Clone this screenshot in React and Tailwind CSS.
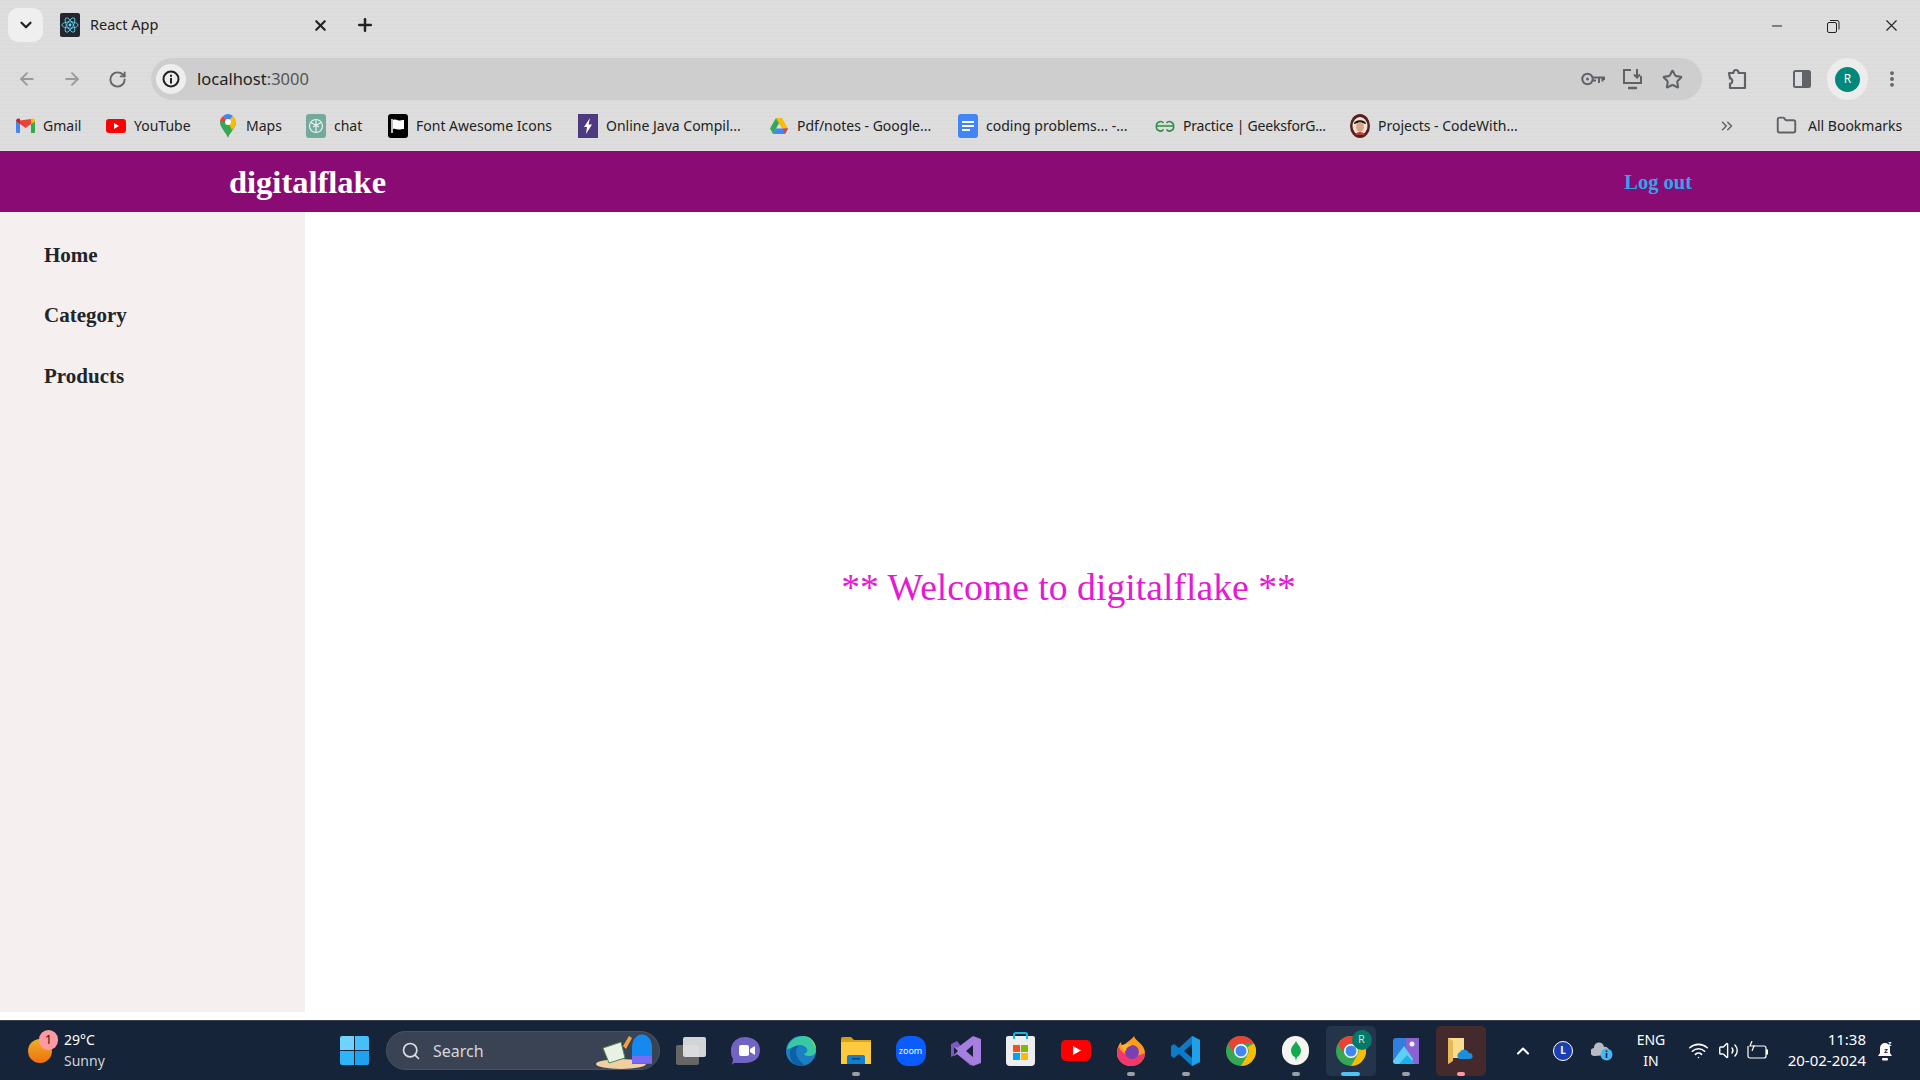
import { ArrowLeft, ArrowRight, RotateCw, X, Plus, ChevronDown, ChevronUp, ChevronsRight, Star, EllipsisVertical, Minus, Folder, Search, Wifi, Volume2 } from 'lucide-react'

const BOOKMARKS = [
  { label: 'Gmail', w: 'w-[91px]', icon: <GmailIcon /> },
  { label: 'YouTube', w: 'w-[112px]', icon: <YoutubeIcon /> },
  { label: 'Maps', w: 'w-[88px]', icon: <MapsIcon /> },
  { label: 'chat', w: 'w-[82px]', icon: <ChatIcon /> },
  { label: 'Font Awesome Icons', w: 'w-[190px]', icon: <FlagIcon /> },
  { label: 'Online Java Compil...', w: 'w-[191px]', icon: <BoltIcon /> },
  { label: 'Pdf/notes - Google...', w: 'w-[189px]', icon: <DriveIcon /> },
  { label: 'coding problems... -...', w: 'w-[197px]', icon: <DocsIcon /> },
  { label: 'Practice | GeeksforG...', w: 'w-[195px] tracking-[-0.2px]', icon: <GfgIcon /> },
  { label: 'Projects - CodeWith...', w: 'w-[368px]', icon: <AvatarIcon /> },
]

function GmailIcon() {
  return (
    <svg width="19" height="16" viewBox="0 0 19 16">
      <path d="M0 3v11a1 1 0 0 0 1 1h3V6z" fill="#4285f4" />
      <path d="M19 3v11a1 1 0 0 1-1 1h-3V6z" fill="#34a853" />
      <path d="M0 3l4 3 5.500 4 5.500-4V1z" fill="#ea4335" />
      <path d="M15 1v5l4-3c0-2-2-3-4-2z" fill="#fbbc04" />
      <path d="M0 3c0-2 2-3 4-2v5z" fill="#c5221f" />
    </svg>
  )
}

function YoutubeIcon() {
  return (
    <svg width="20" height="14" viewBox="0 0 20 14">
      <rect width="20" height="14" rx="3" fill="#f00" />
      <path d="M8 4l5 3-5 3z" fill="#fff" />
    </svg>
  )
}

function MapsIcon() {
  return (
    <svg width="16" height="24" viewBox="0 0 16 24">
      <path d="M8 24C6 18 0 14 0 8h16c0 6-6 10-8 16z" fill="#34a853" />
      <path d="M0 8a8 8 0 0 1 3-6l5 6z" fill="#ea4335" />
      <path d="M3 2a8 8 0 0 1 10 0L8 8z" fill="#4285f4" />
      <path d="M13 2a8 8 0 0 1 3 6c0 3-2 6-4 8L8 8z" fill="#fbbc04" />
      <circle cx="8" cy="8" r="3" fill="#fff" />
    </svg>
  )
}

function ChatIcon() {
  return (
    <span className="flex h-[24px] w-[20px] items-center justify-center rounded-[3px] bg-[#74aa9c]">
      <svg width="16" height="16" viewBox="0 0 16 16" fill="none" stroke="#e8f3f0" strokeWidth="1.200">
        <circle cx="8" cy="8" r="6.500" />
        <path d="M8 1.500v9M3 4.500l8 4.500M13 4.500l-8 4.500M8 14.500v-5" />
      </svg>
    </span>
  )
}

function FlagIcon() {
  return (
    <span className="flex h-[24px] w-[20px] items-center justify-center rounded-[3px] bg-black">
      <svg width="16" height="16" viewBox="0 0 16 16">
        <path d="M2 1v14" stroke="#fff" strokeWidth="1.500" />
        <path d="M3 2c3-1.500 5 1 7 .5s3-.5 4-.5v9c-2 0-3 .5-5 .5S5 10 3 11z" fill="#fff" />
      </svg>
    </span>
  )
}

function BoltIcon() {
  return (
    <span className="flex h-[24px] w-[20px] items-center justify-center bg-[#4e3a80]">
      <svg width="10" height="16" viewBox="0 0 10 16">
        <path d="M7 0L1 9h3l-1 7 6-9.500H5.500z" fill="#fff" />
      </svg>
    </span>
  )
}

function DriveIcon() {
  return (
    <svg width="18" height="16" viewBox="0 0 18 16">
      <path d="M6 0h6l6 10.500h-6z" fill="#fbbc04" />
      <path d="M6 0l3 5.200-6 10.800-3-5.500z" fill="#34a853" />
      <path d="M3 16l3-5.500h12L15 16z" fill="#4285f4" />
      <path d="M15 16l3-5.500h-5z" fill="#ea4335" />
    </svg>
  )
}

function DocsIcon() {
  return (
    <span className="flex h-[24px] w-[20px] flex-col justify-center gap-[2px] rounded-[3px] bg-[#4285f4] px-[4px]">
      <span className="h-[2px] w-full bg-white" />
      <span className="h-[2px] w-full bg-white" />
      <span className="h-[2px] w-[8px] bg-white" />
    </span>
  )
}

function GfgIcon() {
  return (
    <svg width="20" height="12" viewBox="0 0 20 12" fill="none" stroke="#2f8d46" strokeWidth="1.600">
      <path d="M10 6H1.500a4 4 0 0 1 7-3M1.500 6a4 4 0 0 0 7 3.500" />
      <path d="M10 6h8.500a4 4 0 0 0-7-3M18.500 6a4 4 0 0 1-7 3.500" />
    </svg>
  )
}

function AvatarIcon() {
  return (
    <svg width="20" height="24" viewBox="0 0 20 24">
      <ellipse cx="10" cy="12" rx="10" ry="12" fill="#5a1f1a" />
      <ellipse cx="10" cy="12" rx="7.500" ry="9" fill="#f0e6e0" />
      <path d="M4 10c0-5 12-5 12 0-3-1.500-9-1.500-12 0z" fill="#1c1c1c" />
      <ellipse cx="10" cy="13" rx="4" ry="5" fill="#e0a585" />
      <path d="M5 21c2-4 8-4 10 0z" fill="#b5403a" />
    </svg>
  )
}

function ReactFavicon() {
  return (
    <span className="flex h-[24px] w-[20px] items-center justify-center rounded-[2px] bg-[#22272e]">
      <svg width="18" height="20" viewBox="-10 -11 20 22" fill="none" stroke="#61dafb" strokeWidth="0.900">
        <ellipse rx="9" ry="3.500" />
        <ellipse rx="9" ry="3.500" transform="rotate(60)" />
        <ellipse rx="9" ry="3.500" transform="rotate(120)" />
        <circle r="1.600" fill="#61dafb" stroke="none" />
      </svg>
    </span>
  )
}

function KeyIcon() {
  return (
    <svg width="24" height="14" viewBox="0 0 24 14" fill="none" stroke="#5f6368" strokeWidth="2">
      <circle cx="6.500" cy="7" r="5.200" />
      <circle cx="6.500" cy="7" r="1.500" fill="#5f6368" stroke="none" />
      <path d="M11.500 5.500H23v2.500" />
      <path d="M11.500 8.500h3.500M18 6v5M21.500 6v3.500" />
    </svg>
  )
}

function InstallIcon() {
  return (
    <svg width="21" height="22" viewBox="0 0 21 22" fill="none" stroke="#5f6368" strokeWidth="2">
      <path d="M9 2H2v13h17V8" />
      <path d="M6 20h9" strokeWidth="2.500" />
      <path d="M15 1v8M12 6.500l3 3 3-3" />
    </svg>
  )
}

function PuzzleIcon() {
  return (
    <svg width="20" height="24" viewBox="0 0 20 24" fill="none" stroke="#5f6368" strokeWidth="2.200" strokeLinejoin="round">
      <path d="M2 6h4.500c-.5-4 5.500-4 5 0H18v15H3v-4.500c3 .5 3-5.500 0-5z" />
    </svg>
  )
}

function SidePanelIcon() {
  return (
    <svg width="18" height="18" viewBox="0 0 18 18">
      <rect x="1" y="1" width="16" height="16" rx="1.500" fill="none" stroke="#5f6368" strokeWidth="2" />
      <rect x="9" y="1" width="8" height="16" fill="#5f6368" />
    </svg>
  )
}

function RestoreIcon() {
  return (
    <svg width="13" height="14" viewBox="0 0 13 14" fill="none" stroke="#222" strokeWidth="1">
      <rect x="0.500" y="3.500" width="9" height="10" rx="1.500" />
      <path d="M3 1.500h7a2 2 0 0 1 2 2v7" />
    </svg>
  )
}

function InfoIcon() {
  return (
    <svg width="18" height="18" viewBox="0 0 18 18">
      <circle cx="9" cy="9" r="7.500" fill="none" stroke="#222" strokeWidth="2" />
      <rect x="8" y="8" width="2" height="5.500" fill="#222" />
      <rect x="8" y="4.800" width="2" height="2" fill="#222" />
    </svg>
  )
}

function WindowsLogo() {
  return (
    <span className="grid h-[29px] w-[29px] grid-cols-2 gap-[1px]">
      <span className="rounded-tl-[2px] bg-[#6fd3fb]" />
      <span className="rounded-tr-[2px] bg-[#47c0fa]" />
      <span className="rounded-bl-[2px] bg-[#2eb4f9]" />
      <span className="rounded-br-[2px] bg-[#1ba3f2]" />
    </span>
  )
}

function SearchArt() {
  return (
    <svg width="64" height="38" viewBox="0 0 64 38">
      <ellipse cx="26" cy="32" rx="25" ry="5" fill="#f0cfa0" />
      <path d="M8 16l18-6 4 16-16 5z" fill="#e8f1e4" stroke="#4d8a4f" />
      <path d="M28 14l6-10 3 2-6 11z" fill="#f5a041" />
      <path d="M37 16c0-18 20-18 20 0v16H37z" fill="#1689f0" />
      <rect x="37" y="24" width="20" height="7" fill="#7a6cf0" />
    </svg>
  )
}

function TaskViewIcon() {
  return (
    <span className="relative block h-[28px] w-[30px]">
      <span className="absolute bottom-0 left-0 h-[20px] w-[23px] rounded-[2px] bg-[#666]" />
      <span className="absolute right-0 top-0 h-[20px] w-[23px] rounded-[2px] bg-[#e8e8e8]/90" />
    </span>
  )
}

function MeetIcon() {
  return (
    <svg width="29" height="28" viewBox="0 0 29 28">
      <path d="M14 0c8 0 15 5 15 13s-6 13-15 13H3l-2 2 1-6C-1 17-.5 12 1 8c2-5 7-8 13-8z" fill="#7264c4" />
      <rect x="8" y="8" width="10" height="11" rx="2" fill="#fff" />
      <path d="M19 12l5-3v9l-5-3z" fill="#fff" />
    </svg>
  )
}

function EdgeIcon() {
  return (
    <svg width="30" height="30" viewBox="0 0 30 30">
      <circle cx="15" cy="15" r="15" fill="#1b7fc4" />
      <path d="M1 13C3 3 12 0 17 0c8 0 13 6 13 15 0 3-3 5-7 5-3 0-5-1-5-2 3-1 4-3 3-5-2-4-7-5-11-3-4 1-7 3-9 3z" fill="#38c8a4" />
      <path d="M20 30c-7 2-15-2-16-10-1-6 3-11 9-10-3 2-4 6-2 10 2 5 6 8 9 10z" fill="#0f5fa6" />
      <path d="M30 13c0-7-6-13-14-13 6 0 11 4 12 9z" fill="#8ade4c" />
    </svg>
  )
}

function ExplorerIcon() {
  return (
    <svg width="30" height="27" viewBox="0 0 30 27">
      <path d="M0 2a2 2 0 0 1 2-2h8l4 4h-14z" fill="#d59f0c" />
      <rect y="3" width="30" height="24" fill="#fcc93f" />
      <rect y="3" width="30" height="2" fill="#d9a414" />
      <path d="M6 27v-7a2 2 0 0 1 2-2h14a2 2 0 0 1 2 2v7z" fill="#0f7fd0" />
      <rect x="11" y="21" width="8" height="1.500" fill="#063d70" />
    </svg>
  )
}

function ZoomIcon() {
  return (
    <span className="flex h-[30px] w-[30px] items-center justify-center rounded-[12px] bg-[#0b5cff] text-[9px] text-white">zoom</span>
  )
}

function VsIcon() {
  return (
    <svg width="30" height="30" viewBox="0 0 30 30">
      <path d="M0 8l6-3 16 20-2 5-14-12-6 3z" fill="#7e57c2" />
      <path d="M22 0l8 3v24l-8 3-16-12-3 2V10l3 2z" fill="#a67fe0" />
      <path d="M22 9l-7 6 7 6z" fill="#16243a" />
      <path d="M3 11l4 4-4 4z" fill="#16243a" />
    </svg>
  )
}

function StoreIcon() {
  return (
    <span className="relative flex h-[30px] w-[29px] items-center justify-center rounded-b-[4px] rounded-t-[2px] bg-[#eeeeee]">
      <span className="absolute -top-[4px] left-[7px] h-[7px] w-[15px] rounded-t-[3px] border-2 border-b-0 border-[#19b6e8]" />
      <span className="mt-[3px] grid h-[15px] w-[15px] grid-cols-2 gap-[1px]">
        <span className="bg-[#f25022]" />
        <span className="bg-[#7fba00]" />
        <span className="bg-[#00a4ef]" />
        <span className="bg-[#ffb900]" />
      </span>
    </span>
  )
}

function YoutubeTaskIcon() {
  return (
    <svg width="30" height="21" viewBox="0 0 30 21">
      <rect width="30" height="21" rx="5" fill="#f00" />
      <path d="M12 6l8 4.500-8 4.500z" fill="#fff" />
    </svg>
  )
}

function FirefoxIcon() {
  return (
    <svg width="28" height="30" viewBox="0 0 28 30">
      <path d="M17 0c1 5 11 8 11 17a14 13 0 0 1-28 0C0 12 2 8 4 6c0 3 2 4 3 4 1-4 7-5 10-10z" fill="#ff9a1f" />
      <path d="M0 17c0-2 1-4 2-6 3 8 14 12 26 6a14 13 0 0 1-28 0z" fill="#f0386b" />
      <circle cx="15" cy="16" r="7" fill="#7a3fb0" />
      <path d="M4 10c4-3 8-2 11 0-4 0-6 2-6 5-3-1-4-3-5-5z" fill="#ffb52b" />
    </svg>
  )
}

function VscodeIcon() {
  return (
    <svg width="29" height="30" viewBox="0 0 29 30">
      <path d="M21 0l8 4v22l-8 4-13-12-5 4-3-2V10l3-2 5 4zM21 8l-8 7 8 7z" fill="#0a7cc8" />
      <path d="M21 0l8 4v22l-8 4z" fill="#1ea0ea" />
    </svg>
  )
}

function ChromeIcon() {
  return (
    <svg width="30" height="30" viewBox="0 0 30 30">
      <circle cx="15" cy="15" r="15" fill="#34a853" />
      <path d="M15 0a15 15 0 0 1 13 7.500H15a7.500 7.500 0 0 0-6.500 11.300L2 7.500A15 15 0 0 1 15 0z" fill="#ea4335" />
      <path d="M28 7.500A15 15 0 0 1 15 30l6.500-11.200A7.500 7.500 0 0 0 21.500 11z" fill="#fbbc04" />
      <circle cx="15" cy="15" r="7" fill="#fff" />
      <circle cx="15" cy="15" r="5.500" fill="#4285f4" />
    </svg>
  )
}

function MongoIcon() {
  return (
    <span className="flex h-[29px] w-[27px] items-center justify-center rounded-full bg-[#f4f4f0]">
      <svg width="10" height="20" viewBox="0 0 10 20">
        <path d="M5 0c1 3 5 5 5 10 0 3-3 6-4 6l-1 4-1-4c-1 0-4-3-4-6 0-5 4-7 5-10z" fill="#13aa52" />
      </svg>
    </span>
  )
}

function ActiveChromeIcon() {
  return (
    <span className="relative flex h-[50px] w-[50px] items-center justify-center rounded-[5px] bg-[#24344a]">
      <ChromeIcon />
      <span className="absolute right-[4px] top-[4px] flex h-[20px] w-[20px] items-center justify-center rounded-full bg-[#00796b] text-[11px] text-[#bfe3dc]">R</span>
    </span>
  )
}

function PhotosIcon() {
  return (
    <svg width="26" height="26" viewBox="0 0 26 26">
      <rect width="26" height="26" rx="3" fill="#2f7fdc" />
      <rect x="13" width="13" height="26" fill="#8a63d2" />
      <circle cx="19" cy="6" r="2.500" fill="#f3eefc" />
      <path d="M0 23l11-15 9 13-2 5H3a3 3 0 0 1-3-3z" fill="#5ed0f7" />
      <path d="M6 26l8-9 8 9z" fill="#1eb0e8" />
    </svg>
  )
}

function FolderCloudIcon() {
  return (
    <span className="flex h-[50px] w-[50px] items-center justify-center rounded-[5px] bg-[#452a2d]">
      <svg width="25" height="26" viewBox="0 0 25 26">
        <path d="M0 0h16v20H5l-2 4-3 2z" fill="#fbdc8e" />
        <path d="M0 0l5 3v20l-5 3z" fill="#e5b955" />
        <path d="M11 21a4 4 0 0 1 1-7 5 5 0 0 1 9 1 3 3 0 0 1 1 6z" fill="#1a8fe0" />
      </svg>
    </span>
  )
}

function LockIcon() {
  return (
    <span className="flex h-[20px] w-[20px] items-center justify-center rounded-full border border-white bg-[#1b3fb0] text-[10px] font-bold text-white">L</span>
  )
}

function CloudInfoIcon() {
  return (
    <svg width="22" height="20" viewBox="0 0 22 20">
      <path d="M4 15a4 4 0 0 1-1-8 5 5 0 0 1 10-1 4 4 0 0 1 2 8z" fill="#b8bcc2" />
      <circle cx="15.500" cy="13.500" r="6" fill="#49b5f2" />
      <rect x="14.700" y="12" width="1.600" height="5" fill="#10243a" />
      <rect x="14.700" y="9.500" width="1.600" height="1.600" fill="#10243a" />
    </svg>
  )
}

function BatteryIcon() {
  return (
    <svg width="21" height="20" viewBox="0 0 21 20" fill="none" stroke="#fff" strokeWidth="1.200">
      <path d="M6 5h11a2 2 0 0 1 2 2v8a2 2 0 0 1-2 2H3a2 2 0 0 1-2-2V5" />
      <path d="M19 9h2v4h-2" fill="#fff" />
      <path d="M5 0L3 5h4l-2 5" />
    </svg>
  )
}

function BellIcon() {
  return (
    <svg width="18" height="22" viewBox="0 0 18 22">
      <path d="M9 3a5 5 0 0 0-5 5v5l-2 3h14l-2-3V8a5 5 0 0 0-5-5z" fill="#fff" />
      <rect x="6" y="18" width="6" height="2.500" rx="1" fill="#fff" />
      <text x="8" y="13" fontSize="8" fontWeight="700" fill="#16243a" fontFamily="Liberation Sans, sans-serif">z</text>
      <text x="12" y="6" fontSize="7" fontWeight="700" fill="#fff" fontFamily="Liberation Sans, sans-serif">z</text>
    </svg>
  )
}

function Dock({ children, dot }) {
  return (
    <div className="relative flex h-[60px] w-[55px] items-center justify-center">
      {children}
      {dot && <span className={`absolute bottom-[5px] h-[4px] rounded-full ${dot}`} />}
    </div>
  )
}

function BrowserChrome() {
  return (
    <div className="h-[151px] bg-[#dcdcdc] bg-[repeating-linear-gradient(0deg,#dddddd_0px,#e0e0e0_1px,#d9d9d9_2px,#dedede_4px)] text-[#222]">
      {/* Tab strip */}
      <div className="flex h-[50px] items-start pt-[8px]">
        <div className="ml-[8px] flex h-[34px] w-[35px] items-center justify-center rounded-[10px] bg-[#efefef]">
          <ChevronDown size={18} strokeWidth={3} color="#222" />
        </div>
        <div className="ml-[17px] mt-[5px] flex w-[273px] items-center">
          <ReactFavicon />
          <span className="ml-[10px] flex-1 text-[14.500px]">React App</span>
          <X size={17} strokeWidth={3} color="#222" className="mr-[4px]" />
        </div>
        <Plus size={20} strokeWidth={3} color="#222" className="ml-[22px] mt-[7px]" />
        <div className="ml-auto mr-[19px] mt-[8px] flex items-center gap-[42px]">
          <Minus size={16} strokeWidth={1.600} color="#222" />
          <RestoreIcon />
          <X size={19} strokeWidth={1.400} color="#222" />
        </div>
      </div>

      {/* Toolbar */}
      <div className="flex h-[50px] items-center pt-[8px]">
        <ArrowLeft size={20} color="#9a9a9a" strokeWidth={2.200} className="ml-[17px]" />
        <ArrowRight size={20} color="#9a9a9a" strokeWidth={2.200} className="ml-[25px]" />
        <RotateCw size={19} color="#666" strokeWidth={2.400} className="ml-[26px]" />
        <div className="ml-[24px] flex h-[42px] w-[1551px] items-center rounded-full bg-[#cecece] px-[5px]">
          <div className="flex h-[30px] w-[30px] items-center justify-center rounded-full bg-[#eeeeee]">
            <InfoIcon />
          </div>
          <span className="ml-[11px] flex-1 text-[16.500px]">
            localhost<span className="text-[#555]">:3000</span>
          </span>
          <KeyIcon />
          <span className="ml-[17px] flex"><InstallIcon /></span>
          <Star size={21} color="#5f6368" strokeWidth={2.400} className="ml-[19px] mr-[14px]" />
        </div>
        <span className="ml-[25px] flex"><PuzzleIcon /></span>
        <span className="ml-[46px] flex"><SidePanelIcon /></span>
        <div className="ml-[16px] flex h-[42px] w-[41px] items-center justify-center rounded-full bg-[#ececec]">
          <span className="flex h-[25px] w-[25px] items-center justify-center rounded-full bg-[#00897b] text-[12px] text-white">R</span>
        </div>
        <EllipsisVertical size={20} color="#5f6368" strokeWidth={2.600} className="ml-[14px]" />
      </div>

      {/* Bookmarks */}
      <div className="flex h-[51px] items-center pl-[15px] text-[14px]">
        {BOOKMARKS.map((b) => (
          <div key={b.label} className={`flex shrink-0 items-center ${b.w}`}>
            <span className="flex w-[20px] justify-center">{b.icon}</span>
            <span className="ml-[8px] whitespace-nowrap">{b.label}</span>
          </div>
        ))}
        <ChevronsRight size={18} color="#5f6368" />
        <Folder size={21} color="#5f6368" strokeWidth={2.200} className="ml-[40px]" />
        <span className="ml-[11px] whitespace-nowrap">All Bookmarks</span>
      </div>
    </div>
  )
}

function Taskbar() {
  return (
    <div className="flex h-[60px] items-center border-t border-[#39424f] bg-[#16243a] font-['Noto_Sans',sans-serif] text-white">
      <div className="relative ml-[28px] h-[24px] w-[24px] rounded-full bg-[linear-gradient(#eeb027,#ee6f10)]">
        <span className="absolute -right-[6px] -top-[9px] flex h-[20px] w-[19px] items-center justify-center rounded-full bg-[#ff9aa2] text-[13px] text-[#222]">1</span>
      </div>
      <div className="ml-[12px] w-[276px] pb-[2px] text-[14px] leading-[21px]">
        <div>29°C</div>
        <div className="text-[#cfd3d8]">Sunny</div>
      </div>
      <WindowsLogo />
      <div className="ml-[17px] flex h-[39px] w-[274px] items-center rounded-full border border-[#4a5362] bg-[#3a4354] pl-[14px]">
        <Search size={20} color="#dddddd" strokeWidth={2} />
        <span className="ml-[12px] flex-1 text-[16px] text-[#d5d7da]">Search</span>
        <SearchArt />
      </div>
      <div className="ml-[3px] flex">
        <Dock><TaskViewIcon /></Dock>
        <Dock><MeetIcon /></Dock>
        <Dock><EdgeIcon /></Dock>
        <Dock dot="w-[8px] bg-[#9a9fa6]"><ExplorerIcon /></Dock>
        <Dock><ZoomIcon /></Dock>
        <Dock><VsIcon /></Dock>
        <Dock><StoreIcon /></Dock>
        <Dock><YoutubeTaskIcon /></Dock>
        <Dock dot="w-[8px] bg-[#9a9fa6]"><FirefoxIcon /></Dock>
        <Dock dot="w-[8px] bg-[#9a9fa6]"><VscodeIcon /></Dock>
        <Dock><ChromeIcon /></Dock>
        <Dock dot="w-[8px] bg-[#9a9fa6]"><MongoIcon /></Dock>
        <Dock dot="w-[19px] bg-[#4fc3f7]"><ActiveChromeIcon /></Dock>
        <Dock dot="w-[8px] bg-[#9a9fa6]"><PhotosIcon /></Dock>
        <Dock dot="w-[8px] bg-[#ff9aa2]"><FolderCloudIcon /></Dock>
      </div>
      <ChevronUp size={20} strokeWidth={2.400} className="ml-[25px]" />
      <span className="ml-[20px] flex"><LockIcon /></span>
      <span className="ml-[18px] flex"><CloudInfoIcon /></span>
      <div className="ml-[23px] w-[30px] pb-[1px] text-center text-[14px] leading-[21px]">
        <div>ENG</div>
        <div>IN</div>
      </div>
      <Wifi size={21} strokeWidth={1.800} className="ml-[22px]" />
      <Volume2 size={21} strokeWidth={1.600} className="ml-[9px]" />
      <span className="ml-[8px] flex"><BatteryIcon /></span>
      <div className="ml-[7px] w-[91px] pb-[2px] text-right text-[15px] leading-[21px]">
        <div>11:38</div>
        <div>20-02-2024</div>
      </div>
      <span className="ml-[10px] flex"><BellIcon /></span>
    </div>
  )
}

export default function App() {
  return (
    <div className="flex h-[1080px] flex-col overflow-hidden bg-white font-['Noto_Sans',sans-serif]">
      <BrowserChrome />

      {/* Navbar */}
      <header className="flex h-[61px] items-center bg-[#8b0b74] pt-[2px] font-['Liberation_Serif',serif] font-bold">
        <span className="ml-[229px] text-[32.500px] text-white">digitalflake</span>
        <a className="ml-auto mr-[228px] text-[20.500px] text-[#29a8f0]">Log out</a>
      </header>

      <div className="flex h-[808px] font-['Liberation_Serif',serif]">
        {/* Sidebar */}
        <aside className="h-[800px] w-[305px] bg-[#f5eff0] pl-[44px] pt-[13px] text-[21px] font-bold text-[#212529]">
          {['Home', 'Category', 'Products'].map((item) => (
            <div key={item} className="flex h-[60.500px] items-center">{item}</div>
          ))}
        </aside>

        {/* Main */}
        <main className="flex flex-1 items-center justify-center pb-[58px] pr-[88px]">
          <p className="text-[37.700px] text-[#e31bd3]">** Welcome to digitalflake **</p>
        </main>
      </div>

      <Taskbar />
    </div>
  )
}
